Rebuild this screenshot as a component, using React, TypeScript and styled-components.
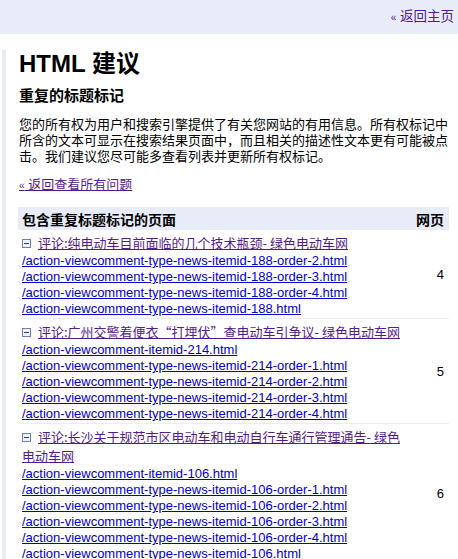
import styled, { createGlobalStyle } from 'styled-components';

const GlobalStyle = createGlobalStyle`
  body {
    margin: 0;
    background: #ffffff;
    font-family: 'Liberation Sans', Arial, 'Noto Sans CJK SC', sans-serif;
    font-size: 13px;
    color: #000000;
  }
`;

type Row = {
  title: string;
  urls: string[];
  count: number;
};

const ROWS: Row[] = [
  {
    title: '评论:纯电动车目前面临的几个技术瓶颈- 绿色电动车网',
    urls: [
      '/action-viewcomment-type-news-itemid-188-order-2.html',
      '/action-viewcomment-type-news-itemid-188-order-3.html',
      '/action-viewcomment-type-news-itemid-188-order-4.html',
      '/action-viewcomment-type-news-itemid-188.html',
    ],
    count: 4,
  },
  {
    title: '评论:广州交警着便衣“打埋伏”查电动车引争议- 绿色电动车网',
    urls: [
      '/action-viewcomment-itemid-214.html',
      '/action-viewcomment-type-news-itemid-214-order-1.html',
      '/action-viewcomment-type-news-itemid-214-order-2.html',
      '/action-viewcomment-type-news-itemid-214-order-3.html',
      '/action-viewcomment-type-news-itemid-214-order-4.html',
    ],
    count: 5,
  },
  {
    title: '评论:长沙关于规范市区电动车和电动自行车通行管理通告- 绿色电动车网',
    urls: [
      '/action-viewcomment-itemid-106.html',
      '/action-viewcomment-type-news-itemid-106-order-1.html',
      '/action-viewcomment-type-news-itemid-106-order-2.html',
      '/action-viewcomment-type-news-itemid-106-order-3.html',
      '/action-viewcomment-type-news-itemid-106-order-4.html',
      '/action-viewcomment-type-news-itemid-106.html',
    ],
    count: 6,
  },
];

const MinusIcon = () => (
  <svg width="9" height="9" viewBox="0 0 9 9">
    <rect x="0.5" y="0.5" width="8" height="8" fill="#eef1fa" stroke="#6d7fb4" />
    <line x1="2" y1="4.5" x2="7" y2="4.5" stroke="#2d3f80" />
  </svg>
);

export default function App() {
  return (
    <>
      <GlobalStyle />
      <TopBar>
        <HomeLink href="#" $visited>
          <Quote>«</Quote> 返回主页
        </HomeLink>
      </TopBar>
      <Main>
        <Title>HTML 建议</Title>
        <SubTitle>重复的标题标记</SubTitle>
        <Intro>
          您的所有权为用户和搜索引擎提供了有关您网站的有用信息。所有权标记中所含的文本可显示在搜索结果页面中，而且相关的描述性文本更有可能被点击。我们建议您尽可能多查看列表并更新所有权标记。
        </Intro>
        <BackLink href="#" $visited>
          <Quote>«</Quote> 返回查看所有问题
        </BackLink>
        <Table>
          <thead>
            <tr>
              <HeadCell>包含重复标题标记的页面</HeadCell>
              <HeadCell $right>网页</HeadCell>
            </tr>
          </thead>
          <tbody>
            {ROWS.map((row) => (
              <tr key={row.count}>
                <PagesCell>
                  <TitleLine>
                    <IconWrap>
                      <MinusIcon />
                    </IconWrap>
                    <TitleLink href="#" $visited>
                      {row.title}
                    </TitleLink>
                  </TitleLine>
                  {row.urls.map((url) => (
                    <UrlLine key={url}>
                      <Link href="#">{url}</Link>
                    </UrlLine>
                  ))}
                </PagesCell>
                <CountCell>{row.count}</CountCell>
              </tr>
            ))}
          </tbody>
        </Table>
      </Main>
    </>
  );
}

const TopBar = styled.div`
  height: 34px;
  background: #e8ecf8;
  display: flex;
  justify-content: flex-end;
  align-items: center;
  padding: 0 4px 0 0;
  line-height: 16px;
`;

const Link = styled.a<{ $visited?: boolean }>`
  color: ${(p) => (p.$visited ? '#551a8b' : '#0000cc')};
  text-decoration: underline;
  font-family: 'Liberation Sans', Arial, 'Noto Sans CJK SC', sans-serif;
`;

const HomeLink = styled(Link)`
  text-decoration: none;
  font-size: 13.5px;
`;

const TitleLink = styled(Link)`
  font-family: 'Noto Sans CJK SC', 'Liberation Sans', sans-serif;
`;

const Quote = styled.span`
  font-size: 10px;
`;

const Main = styled.div`
  margin: 16px 0 0 2px;
  border-left: 4px solid #e8ecf8;
  padding: 0 9px 0 13px;
`;

const Title = styled.h1`
  margin: 0;
  padding-top: 1px;
  font-size: 24px;
  line-height: 26px;
  font-weight: bold;
  font-family: 'Liberation Sans', Arial, 'Noto Sans CJK SC', sans-serif;
`;

const SubTitle = styled.h2`
  margin: 10px 0 0 0;
  font-size: 15px;
  line-height: 17px;
  font-weight: bold;
`;

const Intro = styled.p`
  margin: 13px 0 0 0;
  line-height: 16px;
`;

const BackLink = styled(Link)`
  display: inline-block;
  margin-top: 12px;
  line-height: 16px;
`;

const Table = styled.table`
  width: 431px;
  margin: 13px 0 0 -1px;
  border-collapse: collapse;
`;

const HeadCell = styled.th<{ $right?: boolean }>`
  background: #e8ecf8;
  height: 23px;
  padding: 0 5px 0 4px;
  text-align: ${(p) => (p.$right ? 'right' : 'left')};
  font-weight: bold;
  font-size: 14px;
`;

const PagesCell = styled.td`
  padding: 4px 0 1px 4px;
  border-bottom: 1px solid #e8ecf8;
  vertical-align: top;
`;

const CountCell = styled.td`
  padding: 0 5px 0 0;
  border-bottom: 1px solid #e8ecf8;
  text-align: right;
  vertical-align: middle;
  width: 40px;
`;

const TitleLine = styled.div`
  line-height: 18px;
  width: 390px;
`;

const IconWrap = styled.span`
  display: inline-block;
  margin-right: 7px;
  vertical-align: 0px;
`;

const UrlLine = styled.div`
  line-height: 16px;
`;
